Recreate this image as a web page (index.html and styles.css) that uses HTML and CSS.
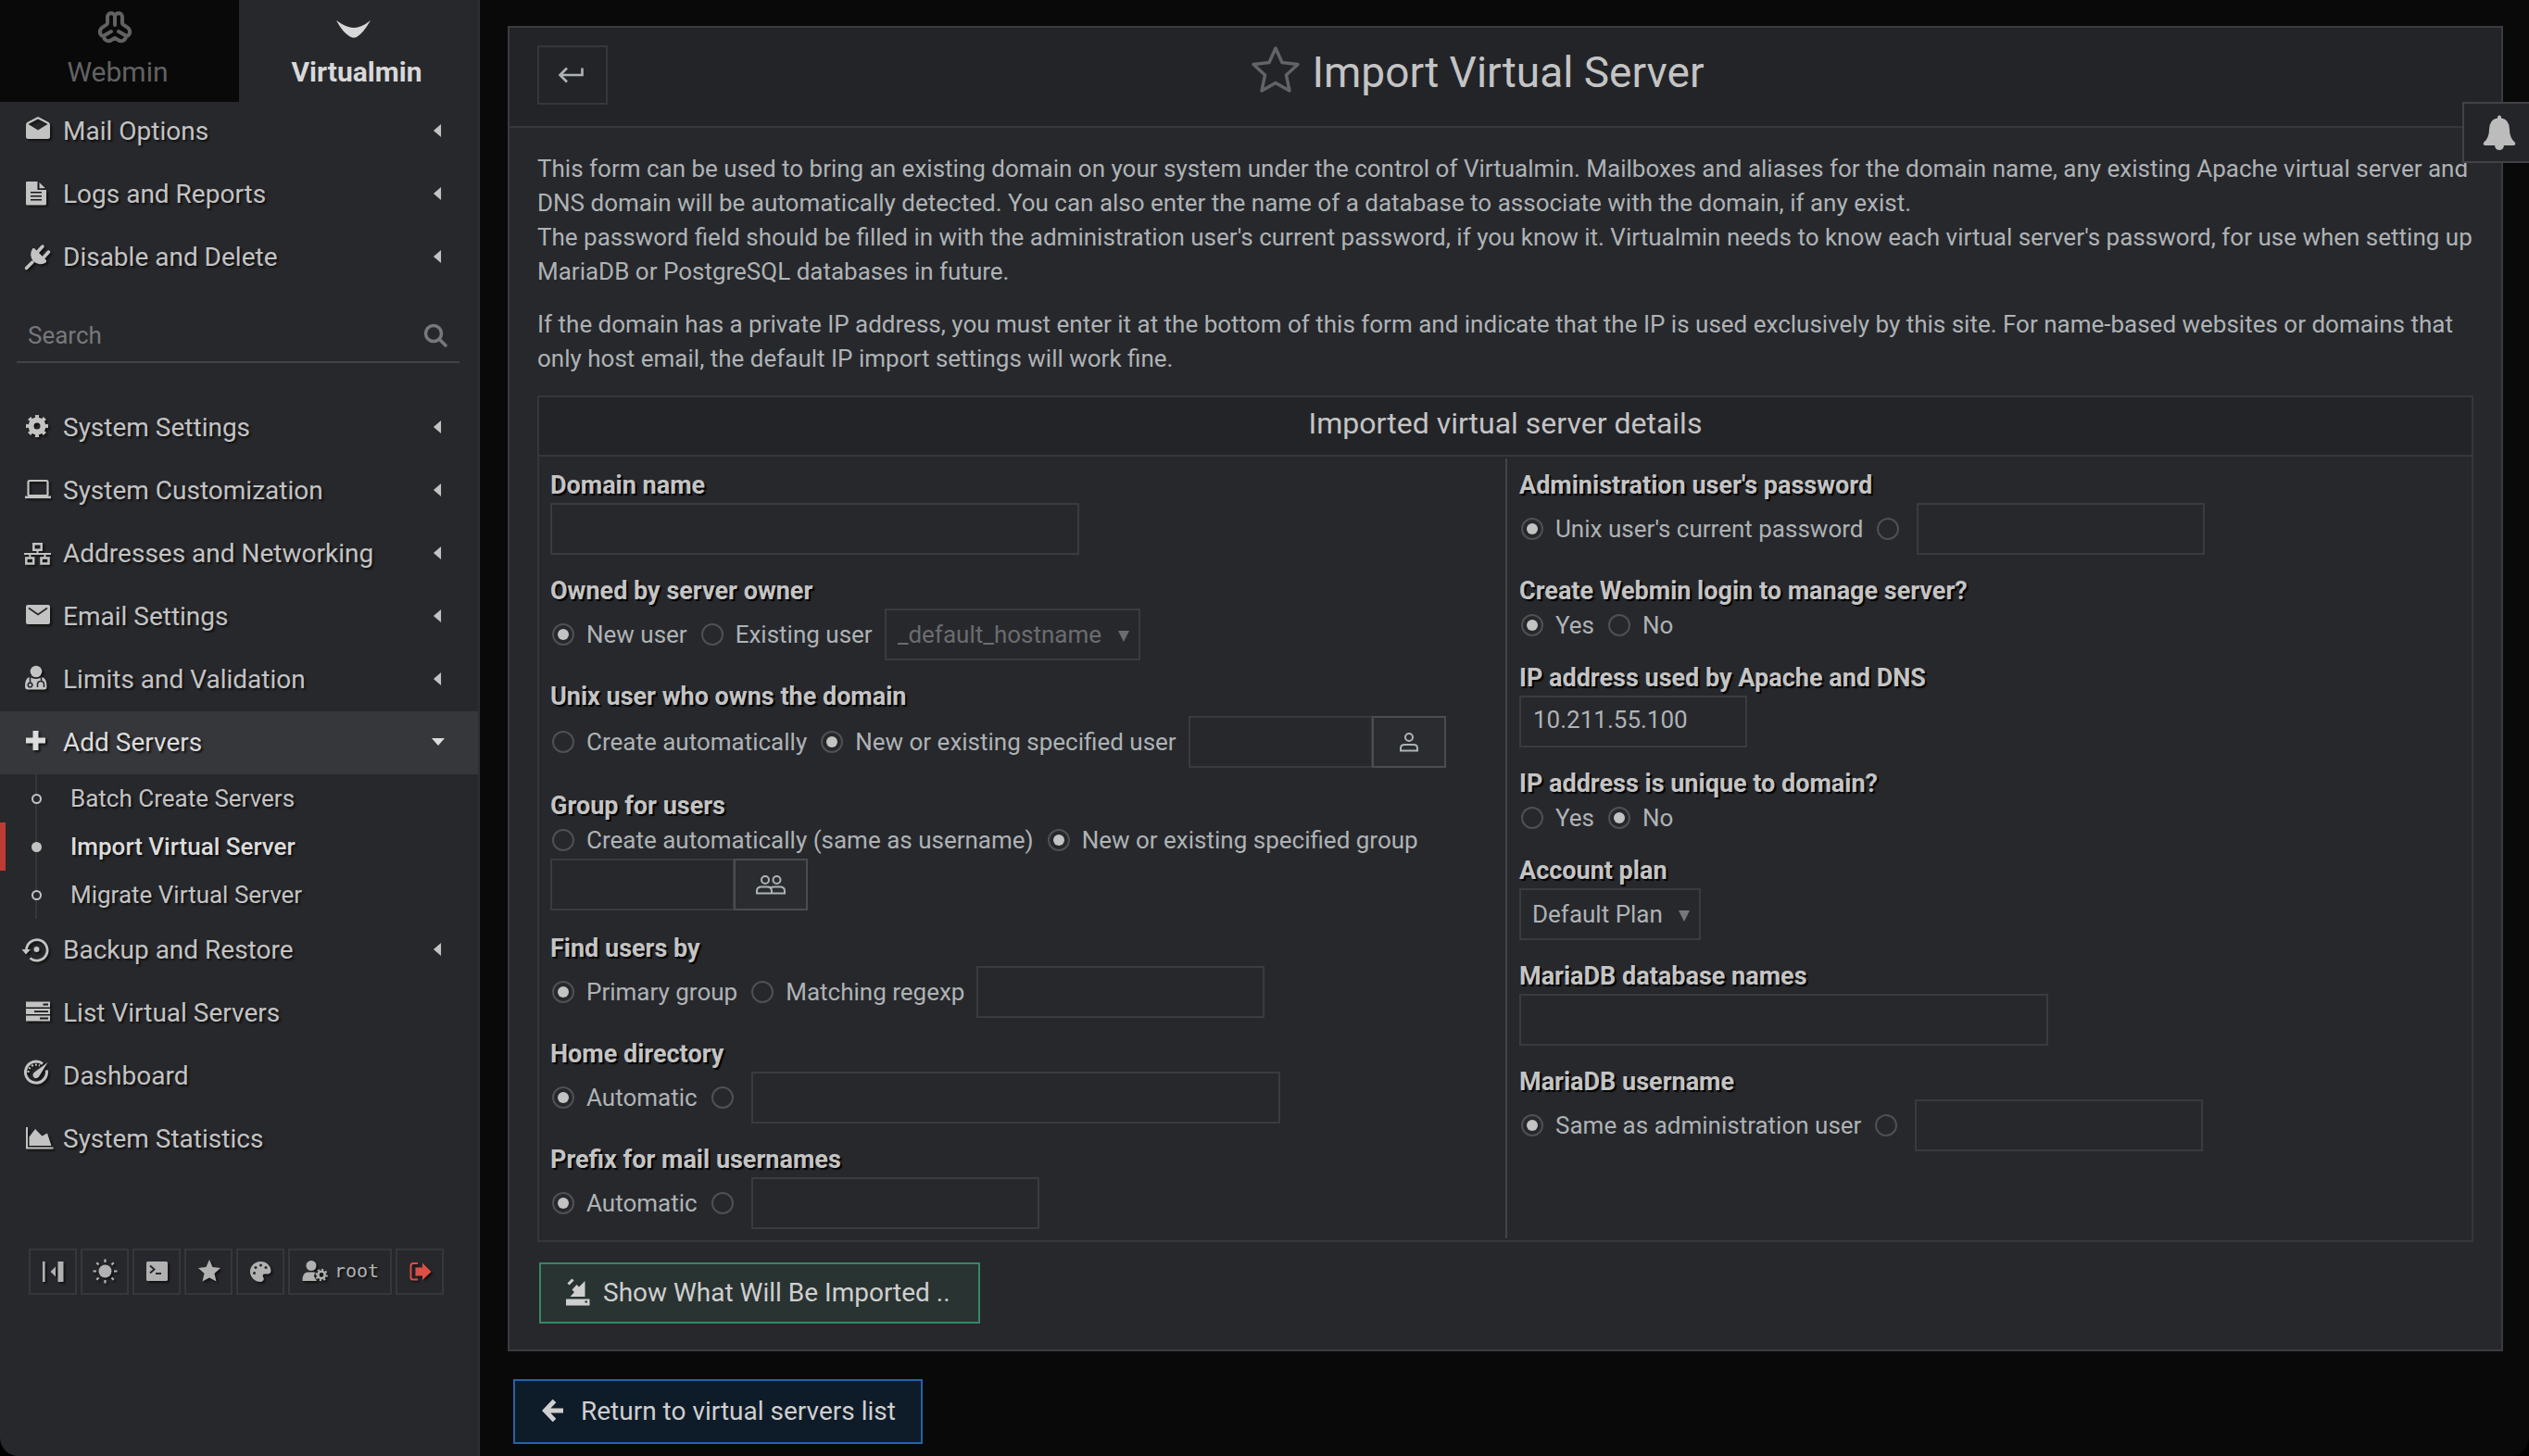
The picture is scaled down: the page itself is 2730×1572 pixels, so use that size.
FILE: index.html
```html
<!DOCTYPE html>
<html lang="en">
<head>
<meta charset="utf-8">
<title>Import Virtual Server</title>
<link rel="stylesheet" href="styles.css">
</head>
<body>
<div class="window">
  <aside class="sidebar">
    <nav class="tabs">
      <a class="tab" href="#webmin">
        <svg class="tab-icon" viewBox="0 0 40 40" fill="none" stroke="currentColor" stroke-width="4" stroke-linecap="round" stroke-linejoin="round"><path d="M20 17V8C20 3 12 3 12 8V15C12 18 5 18 4 23C3 28 7 29 8 29C8 33 12 35 15 34L20 31L25 34C28 35 32 33 32 29C33 29 37 28 36 23C35 18 28 18 28 15V8C28 3 20 3 20 8"/><path d="M9 28 16 24M31 28 24 24"/></svg>
        <span>Webmin</span>
      </a>
      <a class="tab tab-active" href="#virtualmin">
        <svg class="tab-icon" viewBox="0 0 40 40" fill="currentColor"><path d="M1 12Q12 20 20 20T38 12Q30 26 23 30Q19 32 15 29Q8 25 1 12Z"/></svg>
        <span>Virtualmin</span>
      </a>
    </nav>

    <nav class="menu">
      <a class="item" href="#mail"><svg class="icon" viewBox="0 0 32 32" fill="currentColor"><path fill-rule="evenodd" d="M15 1 26.600 7Q28 8 28 10V22.500Q28 25 25.500 25H4.500Q2 25 2 22.500V10Q2 8 3.400 7ZM15 3.500 4.500 9 15 15.500 25.500 9Z"/></svg><span>Mail Options</span><i class="caret"></i></a>
      <a class="item" href="#logs"><svg class="icon" viewBox="0 0 32 32" fill="currentColor"><path fill-rule="evenodd" d="M3 3H14.500V12H24V27Q24 28.500 22.500 28.500H3.500Q2 28.500 2 27V4Q2 3 3 3ZM7 14V15.500H19V14ZM7 18V19.500H19V18ZM7 22V23.500H19V22ZM16.500 4 23 10.300H16.500Z"/></svg><span>Logs and Reports</span><i class="caret"></i></a>
      <a class="item" href="#disable"><svg class="icon" viewBox="0 0 32 32" fill="currentColor" stroke="currentColor"><path stroke="none" d="M9.500 7 11 7 24 20V22A10.500 10.500 0 0 1 9.500 7Z"/><path d="M2.500 28.500 9 22M15 10.500 20 5M21.500 16.500 26.500 11" stroke-width="3.500" stroke-linecap="round"/></svg><span>Disable and Delete</span><i class="caret"></i></a>
    </nav>

    <form class="search" onsubmit="return false">
      <input class="search-input" type="search" placeholder="Search" aria-label="Search">
      <button class="search-button" type="submit" aria-label="Search"><svg viewBox="0 0 26 26" fill="none" stroke="currentColor" stroke-width="3.500"><circle cx="11" cy="11" r="8.500"/><path d="M17 17 24 24" stroke-linecap="round"/></svg></button>
    </form>

    <nav class="menu">
      <a class="item" href="#settings"><svg class="icon" viewBox="0 0 32 32" fill="none" stroke="currentColor"><circle cx="14" cy="15" r="6.500" stroke-width="6"/><circle cx="14" cy="15" r="10" stroke-width="4" pathLength="16" stroke-dasharray="1 1" stroke-dashoffset="0.500"/></svg><span>System Settings</span><i class="caret"></i></a>
      <a class="item" href="#custom"><svg class="icon" viewBox="0 0 32 32" fill="none" stroke="currentColor"><rect x="4.500" y="6" width="21" height="16" rx="1.500" stroke-width="2.200"/><path d="M1 23.800H29" stroke-width="2.600"/></svg><span>System Customization</span><i class="caret"></i></a>
      <a class="item" href="#net"><svg class="icon" viewBox="0 0 32 32" fill="none" stroke="currentColor" stroke-width="2.500"><path d="M10.300 6.300H18.700V12.700H10.300ZM2.300 21.500H10.200V27.500H2.300ZM18.500 21.500H26.500V27.500H18.500Z"/><path d="M0 17H29M14.500 13V17M6.300 17V21M22.500 17V21" stroke-width="2"/></svg><span>Addresses and Networking</span><i class="caret"></i></a>
      <a class="item" href="#email"><svg class="icon" viewBox="0 0 32 32"><rect x="2" y="4" width="26" height="21" rx="2" fill="currentColor"/><path d="M5 7.500 15 14.500 25 7.500" fill="none" stroke="#27282c" stroke-width="1.800"/></svg><span>Email Settings</span><i class="caret"></i></a>
      <a class="item" href="#limits"><svg class="icon" viewBox="0 0 32 32"><circle cx="13" cy="8" r="6.300" fill="currentColor"/><path d="M6 14Q13 18 19 14Q24.500 15 24.500 24Q24.500 27.500 22 27.500H4Q1 27.500 1 24Q1 15 6 14Z" fill="currentColor"/><path d="M6.500 14V20M18.500 14V18M14.500 25V22Q14.500 18.500 18 18.500T21.500 22V25" fill="none" stroke="#27282c" stroke-width="1.600"/><circle cx="6.500" cy="22.500" r="2.300" fill="none" stroke="#27282c" stroke-width="1.600"/></svg><span>Limits and Validation</span><i class="caret"></i></a>
      <a class="item item-open" href="#add"><svg class="icon" viewBox="0 0 32 32" fill="none" stroke="currentColor" stroke-width="6" stroke-linejoin="round"><path d="M2 14.500H23M12.500 4V25"/></svg><span>Add Servers</span><i class="caret caret-down"></i></a>
      <div class="submenu">
        <a class="subitem" href="#batch"><i class="dot"></i><span>Batch Create Servers</span></a>
        <a class="subitem subitem-active" href="#import"><i class="dot"></i><span>Import Virtual Server</span></a>
        <a class="subitem" href="#migrate"><i class="dot"></i><span>Migrate Virtual Server</span></a>
      </div>
      <a class="item" href="#backup"><svg class="icon" viewBox="0 0 32 32" fill="none" stroke="currentColor"><path d="M2.500 17A11.300 11.300 0 1 1 6.500 25.500" stroke-width="2.800"/><path d="M-2.500 16H7L2 21.500Z" fill="currentColor" stroke="none"/><circle cx="13.500" cy="16" r="3" fill="currentColor" stroke="none"/></svg><span>Backup and Restore</span><i class="caret"></i></a>
      <a class="item" href="#list"><svg class="icon" viewBox="0 0 32 32" fill="currentColor"><path fill-rule="evenodd" d="M2 4.500H28V10.500H2ZM20.500 6.500V8.500H26V6.500ZM2 12H28V18H2ZM11 14.300V16H26V14.300ZM2 19.500H28V25.500H2ZM17 21.500V23.500H26V21.500Z"/></svg><span>List Virtual Servers</span></a>
      <a class="item" href="#dashboard"><svg class="icon" viewBox="0 0 32 32" fill="none" stroke="currentColor"><path d="M20 3.500A11.500 11.500 0 1 0 24.300 10.500" stroke-width="3"/><path d="M25.500 2 16 17.500A3.500 3.500 0 1 1 11 12.800Z" fill="currentColor" stroke="none"/><path d="M4.500 13A8.500 8.500 0 0 1 17 5.500" stroke-width="2.200" stroke-dasharray="2 2"/></svg><span>Dashboard</span></a>
      <a class="item" href="#stats"><svg class="icon" viewBox="0 0 32 32" fill="currentColor"><path d="M2 4H4V25.500H31.500V27.500H2Z"/><path d="M5.500 24V14.500L12 6 19.500 13.500 25 10.500 29.500 24Z"/></svg><span>System Statistics</span></a>
    </nav>

    <div class="tools">
      <button class="tool" aria-label="Collapse menu"><svg class="tool-icon" viewBox="0 0 28 28" fill="currentColor"><path d="M3 3H5.600V25H3ZM19.500 3H25.500V25H19.500ZM11.500 14 17 8.500V19.500Z"/></svg></button>
      <button class="tool" aria-label="Light theme"><svg class="tool-icon" viewBox="0 0 28 28" fill="currentColor" stroke="currentColor"><circle cx="14.500" cy="13.500" r="7" stroke="none"/><path d="M14.500 .500V4M14.500 23V26.500M1.500 13.500H5M24 13.500H27.500M5.300 4.300 7.500 6.500M23.700 4.300 21.500 6.500M5.300 22.700 7.500 20.500M23.700 22.700 21.500 20.500" stroke-width="2.200"/></svg></button>
      <button class="tool" aria-label="Terminal"><svg class="tool-icon" viewBox="0 0 28 28"><rect x="3" y="3" width="23" height="21" rx="1.500" fill="currentColor"/><path d="M7 7.500 11.500 11.500 7 15.500M13 16H19" fill="none" stroke="#27282c" stroke-width="2"/></svg></button>
      <button class="tool" aria-label="Favorites"><svg class="tool-icon" viewBox="0 0 28 28" fill="currentColor"><path d="M15 1 18.500 9 27 10 20.500 16 22.500 24.500 15 20.500 7.500 24.500 9.500 16 3 10 11.500 9Z"/></svg></button>
      <button class="tool" aria-label="Theme settings"><svg class="tool-icon" viewBox="0 0 28 28"><path d="M14 3C21 3 25.500 8 25.500 13C25.500 16 23 17 19 16.500C16 16.500 16.500 19 17.500 20.500C18.500 22.500 17 25 14 25C8 25 3 20 3 14S8 3 14 3Z" fill="currentColor"/><g fill="#27282c"><circle cx="7.500" cy="15.500" r="1.500"/><circle cx="9" cy="9.500" r="1.500"/><circle cx="14.500" cy="7" r="1.500"/><circle cx="20" cy="9.500" r="1.500"/></g></svg></button>
      <button class="tool tool-user"><svg class="tool-icon" viewBox="0 0 28 28" fill="currentColor"><circle cx="11" cy="8.500" r="5.500"/><path d="M1.500 25Q1 15.500 8 15.500H15L14 20 17 25Z"/><g fill="none" stroke="currentColor"><circle cx="22" cy="18.500" r="3.700" stroke-width="2.600"/><circle cx="22" cy="18.500" r="5.800" stroke-width="2" pathLength="16" stroke-dasharray="1 1"/></g></svg><span>root</span></button>
      <button class="tool tool-exit" aria-label="Log out"><svg class="tool-icon" viewBox="0 0 28 28"><path d="M12 5H7Q4.500 5 4.500 7.500V20Q4.500 22.500 7 22.500H12" fill="none" stroke="currentColor" stroke-width="2"/><path d="M9.500 9.500H17V4.500L26.500 14 17 23V18.500H9.500Z" fill="currentColor"/></svg></button>
    </div>
  </aside>

  <main class="main">
    <section class="panel">
      <header class="panel-head">
        <button class="back" aria-label="Back"><svg viewBox="0 0 28 20" fill="none" stroke="currentColor" stroke-width="2.600"><path d="M26.500 2.500V10H3M10 2.500 2.500 10 10 17.500"/></svg></button>
        <h1 class="title"><svg class="title-star" viewBox="0 0 52 52" fill="none" stroke="currentColor" stroke-width="3.500" stroke-linejoin="round"><path d="M26 3 33 18.500 50 20.500 37.500 32 41 49 26 40.500 11 49 14.500 32 2 20.500 19 18.500Z"/></svg><span>Import Virtual Server</span></h1>
      </header>
      <div class="panel-body">
        <p class="intro">This form can be used to bring an existing domain on your system under the control of Virtualmin. Mailboxes and aliases for the domain name, any existing Apache virtual server and DNS domain will be automatically detected. You can also enter the name of a database to associate with the domain, if any exist.<br>The password field should be filled in with the administration user's current password, if you know it. Virtualmin needs to know each virtual server's password, for use when setting up MariaDB or PostgreSQL databases in future.</p>
        <p class="intro">If the domain has a private IP address, you must enter it at the bottom of this form and indicate that the IP is used exclusively by this site. For name-based websites or domains that only host email, the default IP import settings will work fine.</p>

        <form id="import-form" class="details" onsubmit="return false">
          <h2 class="details-title">Imported virtual server details</h2>
          <div class="columns">
            <div class="column">
              <div class="field">
                <label class="name" for="dom">Domain name</label>
                <div class="controls"><input class="text text-long" type="text" id="dom"></div>
              </div>
              <div class="field" role="radiogroup" aria-labelledby="l-owner">
                <div class="name" id="l-owner">Owned by server owner</div>
                <div class="controls">
                  <label class="choice"><input type="radio" name="owner" checked><span>New user</span></label>
                  <label class="choice"><input type="radio" name="owner"><span>Existing user</span></label>
                  <span class="picker picker-off"><select aria-label="Existing user" disabled><option>_default_hostname</option></select><svg viewBox="0 0 12 12" fill="currentColor"><path d="M0 0H12L6 12Z"/></svg></span>
                </div>
              </div>
              <div class="field" role="radiogroup" aria-labelledby="l-unix">
                <div class="name" id="l-unix">Unix user who owns the domain</div>
                <div class="controls">
                  <label class="choice"><input type="radio" name="unix"><span>Create automatically</span></label>
                  <label class="choice"><input type="radio" name="unix" checked><span>New or existing specified user</span></label>
                  <span class="combo"><input class="text" type="text" aria-label="User name"><button type="button" aria-label="Choose user"><svg viewBox="0 0 32 24" fill="none" stroke="currentColor" stroke-width="2"><circle cx="16" cy="7" r="4"/><path d="M7 21.500V19Q7 15 11 15H21Q25 15 25 19V21.500Z"/></svg></button></span>
                </div>
              </div>
              <div class="field" role="radiogroup" aria-labelledby="l-group">
                <div class="name" id="l-group">Group for users</div>
                <div class="controls">
                  <label class="choice"><input type="radio" name="group"><span>Create automatically (same as username)</span></label>
                  <label class="choice"><input type="radio" name="group" checked><span>New or existing specified group</span></label>
                </div>
                <div class="controls">
                  <span class="combo"><input class="text" type="text" aria-label="Group name"><button type="button" aria-label="Choose group"><svg viewBox="0 0 32 24" fill="none" stroke="currentColor" stroke-width="2"><circle cx="10" cy="7" r="4"/><circle cx="22.500" cy="7" r="4"/><path d="M1 21.500V19Q1 14.500 6 14.500H12Q17 14.500 17 19V21.500ZM15.500 15.500Q17 14.500 20 14.500H26Q31 14.500 31 19V21.500H17"/></svg></button></span>
                </div>
              </div>
              <div class="field" role="radiogroup" aria-labelledby="l-find">
                <div class="name" id="l-find">Find users by</div>
                <div class="controls">
                  <label class="choice"><input type="radio" name="find" checked><span>Primary group</span></label>
                  <label class="choice"><input type="radio" name="find"><span>Matching regexp</span></label>
                  <input class="text text-mid" type="text" aria-label="Regexp">
                </div>
              </div>
              <div class="field" role="radiogroup" aria-labelledby="l-home">
                <div class="name" id="l-home">Home directory</div>
                <div class="controls">
                  <label class="choice"><input type="radio" name="home" checked><span>Automatic</span></label>
                  <label class="choice choice-bare"><input type="radio" name="home" aria-label="Specified directory"></label>
                  <input class="text text-long" type="text" aria-label="Directory">
                </div>
              </div>
              <div class="field" role="radiogroup" aria-labelledby="l-prefix">
                <div class="name" id="l-prefix">Prefix for mail usernames</div>
                <div class="controls">
                  <label class="choice"><input type="radio" name="prefix" checked><span>Automatic</span></label>
                  <label class="choice choice-bare"><input type="radio" name="prefix" aria-label="Specified prefix"></label>
                  <input class="text text-mid" type="text" aria-label="Prefix">
                </div>
              </div>
            </div>
            <div class="column">
              <div class="field" role="radiogroup" aria-labelledby="l-pass">
                <div class="name" id="l-pass">Administration user's password</div>
                <div class="controls">
                  <label class="choice"><input type="radio" name="pass" checked><span>Unix user's current password</span></label>
                  <label class="choice choice-bare"><input type="radio" name="pass" aria-label="Specified password"></label>
                  <input class="text text-mid" type="text" aria-label="Password">
                </div>
              </div>
              <div class="field" role="radiogroup" aria-labelledby="l-login">
                <div class="name" id="l-login">Create Webmin login to manage server?</div>
                <div class="controls">
                  <label class="choice"><input type="radio" name="login" checked><span>Yes</span></label>
                  <label class="choice"><input type="radio" name="login"><span>No</span></label>
                </div>
              </div>
              <div class="field">
                <label class="name" for="ip">IP address used by Apache and DNS</label>
                <div class="controls"><input class="text text-short" type="text" id="ip" value="10.211.55.100"></div>
              </div>
              <div class="field" role="radiogroup" aria-labelledby="l-unique">
                <div class="name" id="l-unique">IP address is unique to domain?</div>
                <div class="controls">
                  <label class="choice"><input type="radio" name="unique"><span>Yes</span></label>
                  <label class="choice"><input type="radio" name="unique" checked><span>No</span></label>
                </div>
              </div>
              <div class="field">
                <label class="name" for="plan">Account plan</label>
                <div class="controls"><span class="picker"><select id="plan"><option>Default Plan</option></select><svg viewBox="0 0 12 12" fill="currentColor"><path d="M0 0H12L6 12Z"/></svg></span></div>
              </div>
              <div class="field">
                <label class="name" for="dbs">MariaDB database names</label>
                <div class="controls"><input class="text text-long" type="text" id="dbs"></div>
              </div>
              <div class="field" role="radiogroup" aria-labelledby="l-dbuser">
                <div class="name" id="l-dbuser">MariaDB username</div>
                <div class="controls">
                  <label class="choice"><input type="radio" name="dbuser" checked><span>Same as administration user</span></label>
                  <label class="choice choice-bare"><input type="radio" name="dbuser" aria-label="Specified username"></label>
                  <input class="text text-mid" type="text" aria-label="MariaDB username">
                </div>
              </div>
            </div>
          </div>
        </form>
        <button class="action action-import" type="submit" form="import-form"><svg viewBox="0 0 28 30" fill="currentColor"><path fill-rule="evenodd" d="M1 22.500H26.500V29.500H1ZM21.500 24.500V26.500H24V24.500Z"/><path d="M21.500 3V20H5.500L10 15 7.500 12.500 12.500 7 15 9.500Z"/><path d="M3.500 6.500 8.500 1.500" stroke="currentColor" stroke-width="3"/></svg><span>Show What Will Be Imported ..</span></button>
      </div>
    </section>
    <a class="action action-return" href="#servers"><svg viewBox="0 0 28 30" fill="none" stroke="currentColor" stroke-width="5"><path d="M24 15H6M14.500 4.500 4.500 15 14.500 25.500"/></svg><span>Return to virtual servers list</span></a>
  </main>
  <button class="bell" aria-label="Notifications"><svg viewBox="0 0 36 40" fill="currentColor"><path d="M18 1.500Q20 1.500 20 4.500Q29 6 29 17Q29 26 35 31Q36 34 33 34H3Q0 34 1 31Q7 26 7 17Q7 6 16 4.500Q16 1.500 18 1.500Z"/><path d="M13 34H23Q22.500 39 18 39T13 34Z"/></svg></button>
</div>
</body>
</html>
```
FILE: styles.css
```css
* { box-sizing: border-box; }

body {
  margin: 0;
  background: #000;
  color: #aeb3b5;
  font: 26px/37px Roboto, "Liberation Sans", sans-serif;
}

a { color: inherit; text-decoration: none; }
button, input, select { font: inherit; color: inherit; border-radius: 0; }
button { padding: 0; cursor: pointer; }
svg { display: block; flex: none; overflow: visible; }

.window {
  position: relative;
  display: flex;
  min-height: 100vh;
  overflow: hidden;
  background: #090909;
  border-radius: 0 0 20px 20px;
}

/* Sidebar */
.sidebar {
  flex: none;
  width: 518px;
  background: #27282c;
  border-right: 2px solid #2f3034;
  color: #c3c3c3;
}

.tabs { display: grid; grid-template-columns: 1fr 1fr; height: 110px; }
.tab {
  display: flex;
  flex-direction: column;
  align-items: center;
  gap: 10px;
  padding: 10px 4px 0 0;
  background: #090909;
  color: #626262;
  font-size: 30px;
  line-height: 36px;
}
.tab-active { background: none; color: #d8d8d8; font-weight: 700; }
.tab-icon { width: 40px; height: 40px; margin-right: 6px; }

.item {
  display: flex;
  align-items: center;
  height: 68px;
  padding: 0 36px 2px 26px;
  font-size: 28px;
  text-shadow: 2px 2px 2px #111;
}
.tabs + .menu { margin-top: -2px; }
.item span { flex: 1; }
.icon { width: 32px; height: 32px; margin-right: 10px; filter: drop-shadow(2px 2px 1px #111); }
.item-open { background: #36373b; color: #dcdcdc; }
.caret {
  width: 14px;
  height: 14px;
  background: currentColor;
  clip-path: polygon(14% 50%, 72% 0, 72% 100%);
}
.caret-down { height: 8px; clip-path: polygon(0 0, 100% 0, 50% 100%); }

.search {
  display: flex;
  align-items: center;
  height: 60px;
  margin: 20px 20px 36px 18px;
  padding: 2px 13px 0 12px;
  border-bottom: 2px solid #424347;
}
.search-input { flex: 1; min-width: 0; padding: 0; border: 0; outline: 0; background: none; }
.search-input::placeholder { color: #77787a; opacity: 1; }
.search-button { border: 0; background: none; color: #77787a; }
.search-button svg { width: 26px; height: 26px; }

.submenu {
  background: linear-gradient(#36373b, #36373b) 38px 0 / 2px 100% no-repeat;
}
.subitem {
  display: flex;
  align-items: center;
  gap: 31px;
  height: 52px;
  padding-left: 28px;
  border-left: 6px solid transparent;
  text-shadow: 2px 2px 2px #111;
}
.subitem-active { border-color: #be3b34; color: #dcdcdc; font-weight: 500; }
.dot { width: 11px; height: 11px; border: 2px solid #c3c3c3; border-radius: 50%; background: #27282c; }
.subitem-active .dot { background: #c3c3c3; }

.tools { display: flex; gap: 4px; margin: 84px 0 0 31px; }
.tool {
  display: flex;
  align-items: center;
  justify-content: center;
  gap: 10px;
  width: 52px;
  height: 50px;
  border: 2px solid #36373b;
  background: none;
  color: #b1b1b1;
  text-shadow: 2px 2px 2px #111;
}
.tool-icon { width: 28px; height: 28px; filter: drop-shadow(2px 2px 1px #111); }
.tool-user { gap: 8px; width: 112px; padding-bottom: 2px; font: 20px/28px "DejaVu Sans Mono", monospace; }
.tool-exit { color: #dc4f46; }

/* Main panel */
.main { flex: 1; min-width: 0; padding: 28px 28px 13px 30px; }
.panel { background: #27282c; border: 2px solid #3a3b3f; }
.panel-head {
  display: grid;
  grid-template-columns: 76px 1fr 136px;
  align-items: center;
  height: 108px;
  padding: 0 30px;
  background: #232428;
  border-bottom: 2px solid #36373b;
}
.back {
  display: flex;
  align-items: center;
  justify-content: center;
  width: 76px;
  height: 64px;
  margin-bottom: 4px;
  padding-right: 4px;
  border: 2px solid #36373b;
  background: none;
}
.back svg { width: 28px; height: 20px; }
.title {
  display: flex;
  align-items: center;
  justify-content: center;
  gap: 14px;
  margin: 0 0 10px;
  color: #c4c4c4;
  font-size: 46px;
  font-weight: 400;
  line-height: 54px;
}
.title-star { width: 52px; height: 52px; margin-bottom: 6px; color: #626365; }

.panel-body { padding: 26px 30px 28px; }
.intro { margin: 0 0 20px; }

.details { margin-top: 21px; border: 2px solid #36373b; }
.details-title {
  margin: 0;
  padding: 11px 0 16px;
  background: #232428;
  border-bottom: 2px solid #36373b;
  color: #c4c4c4;
  font-size: 32px;
  font-weight: 400;
  line-height: 35px;
  text-align: center;
}
.columns { display: grid; grid-template-columns: 1fr 1fr; padding: 2px 0; }
.column { display: flex; flex-direction: column; gap: 21px; padding: 11px 12px 10px; }
.column + .column { padding-left: 13px; border-left: 2px solid #424347; }

.name {
  display: block;
  color: #c4c4c4;
  font-size: 27px;
  font-weight: 700;
  text-shadow: 2px 2px 1px #000;
}
.controls { display: flex; align-items: center; gap: 13px; }
.choice { display: flex; align-items: center; gap: 13px; padding-left: 2px; line-height: 36px; }
.choice-bare { padding-right: 6px; }
.choice input {
  display: grid;
  place-items: center;
  flex: none;
  width: 24px;
  height: 24px;
  margin: 0;
  appearance: none;
  border: 2px solid #4f5053;
  border-radius: 50%;
}
.choice input:checked::before {
  content: "";
  width: 12px;
  height: 12px;
  border-radius: 50%;
  background: #c3c3c3;
}

.text {
  height: 56px;
  padding: 0 13px 4px;
  border: 2px solid #3a3b3f;
  outline: 0;
  background: none;
}
.text-long { width: 571px; }
.text-mid { width: 311px; }
.text-short { width: 246px; }

.picker { position: relative; display: flex; }
.picker select {
  height: 56px;
  padding: 0 39px 0 12px;
  appearance: none;
  border: 2px solid #3a3b3f;
  background: none;
  opacity: 1;
}
.picker svg {
  position: absolute;
  top: 24px;
  right: 12px;
  width: 12px;
  height: 12px;
  color: #77787a;
  pointer-events: none;
}
.picker-off select, .picker-off svg { color: #6b6c6f; }

.combo { display: flex; margin: 2px 0; }
.combo .text { width: 199px; }
.combo button {
  display: flex;
  align-items: center;
  justify-content: center;
  width: 80px;
  margin-left: -1px;
  border: 2px solid #4b4c50;
  background: #2b2c30;
}
.combo svg { width: 32px; height: 24px; }

.action {
  display: inline-flex;
  align-items: center;
  color: #cfcfcf;
  font-size: 28px;
}
.action svg { width: 28px; height: 30px; }
.action-import {
  gap: 13px;
  height: 66px;
  margin: 22px 0 0 2px;
  padding: 0 30px 2px 26px;
  border: 2px solid #3a8566;
  background: #293332;
}
.action-return {
  gap: 15px;
  height: 70px;
  margin: 30px 0 0 6px;
  padding: 0 27px 2px 28px;
  border: 2px solid #2463a9;
  background: #0e1b28;
}

.bell {
  position: absolute;
  top: 110px;
  right: 0;
  display: flex;
  align-items: center;
  justify-content: center;
  width: 72px;
  height: 66px;
  padding-left: 6px;
  border: 2px solid #424347;
  border-right: 0;
  background: #242529;
  color: #bcbcbc;
}
.bell svg { width: 36px; height: 40px; }
```
